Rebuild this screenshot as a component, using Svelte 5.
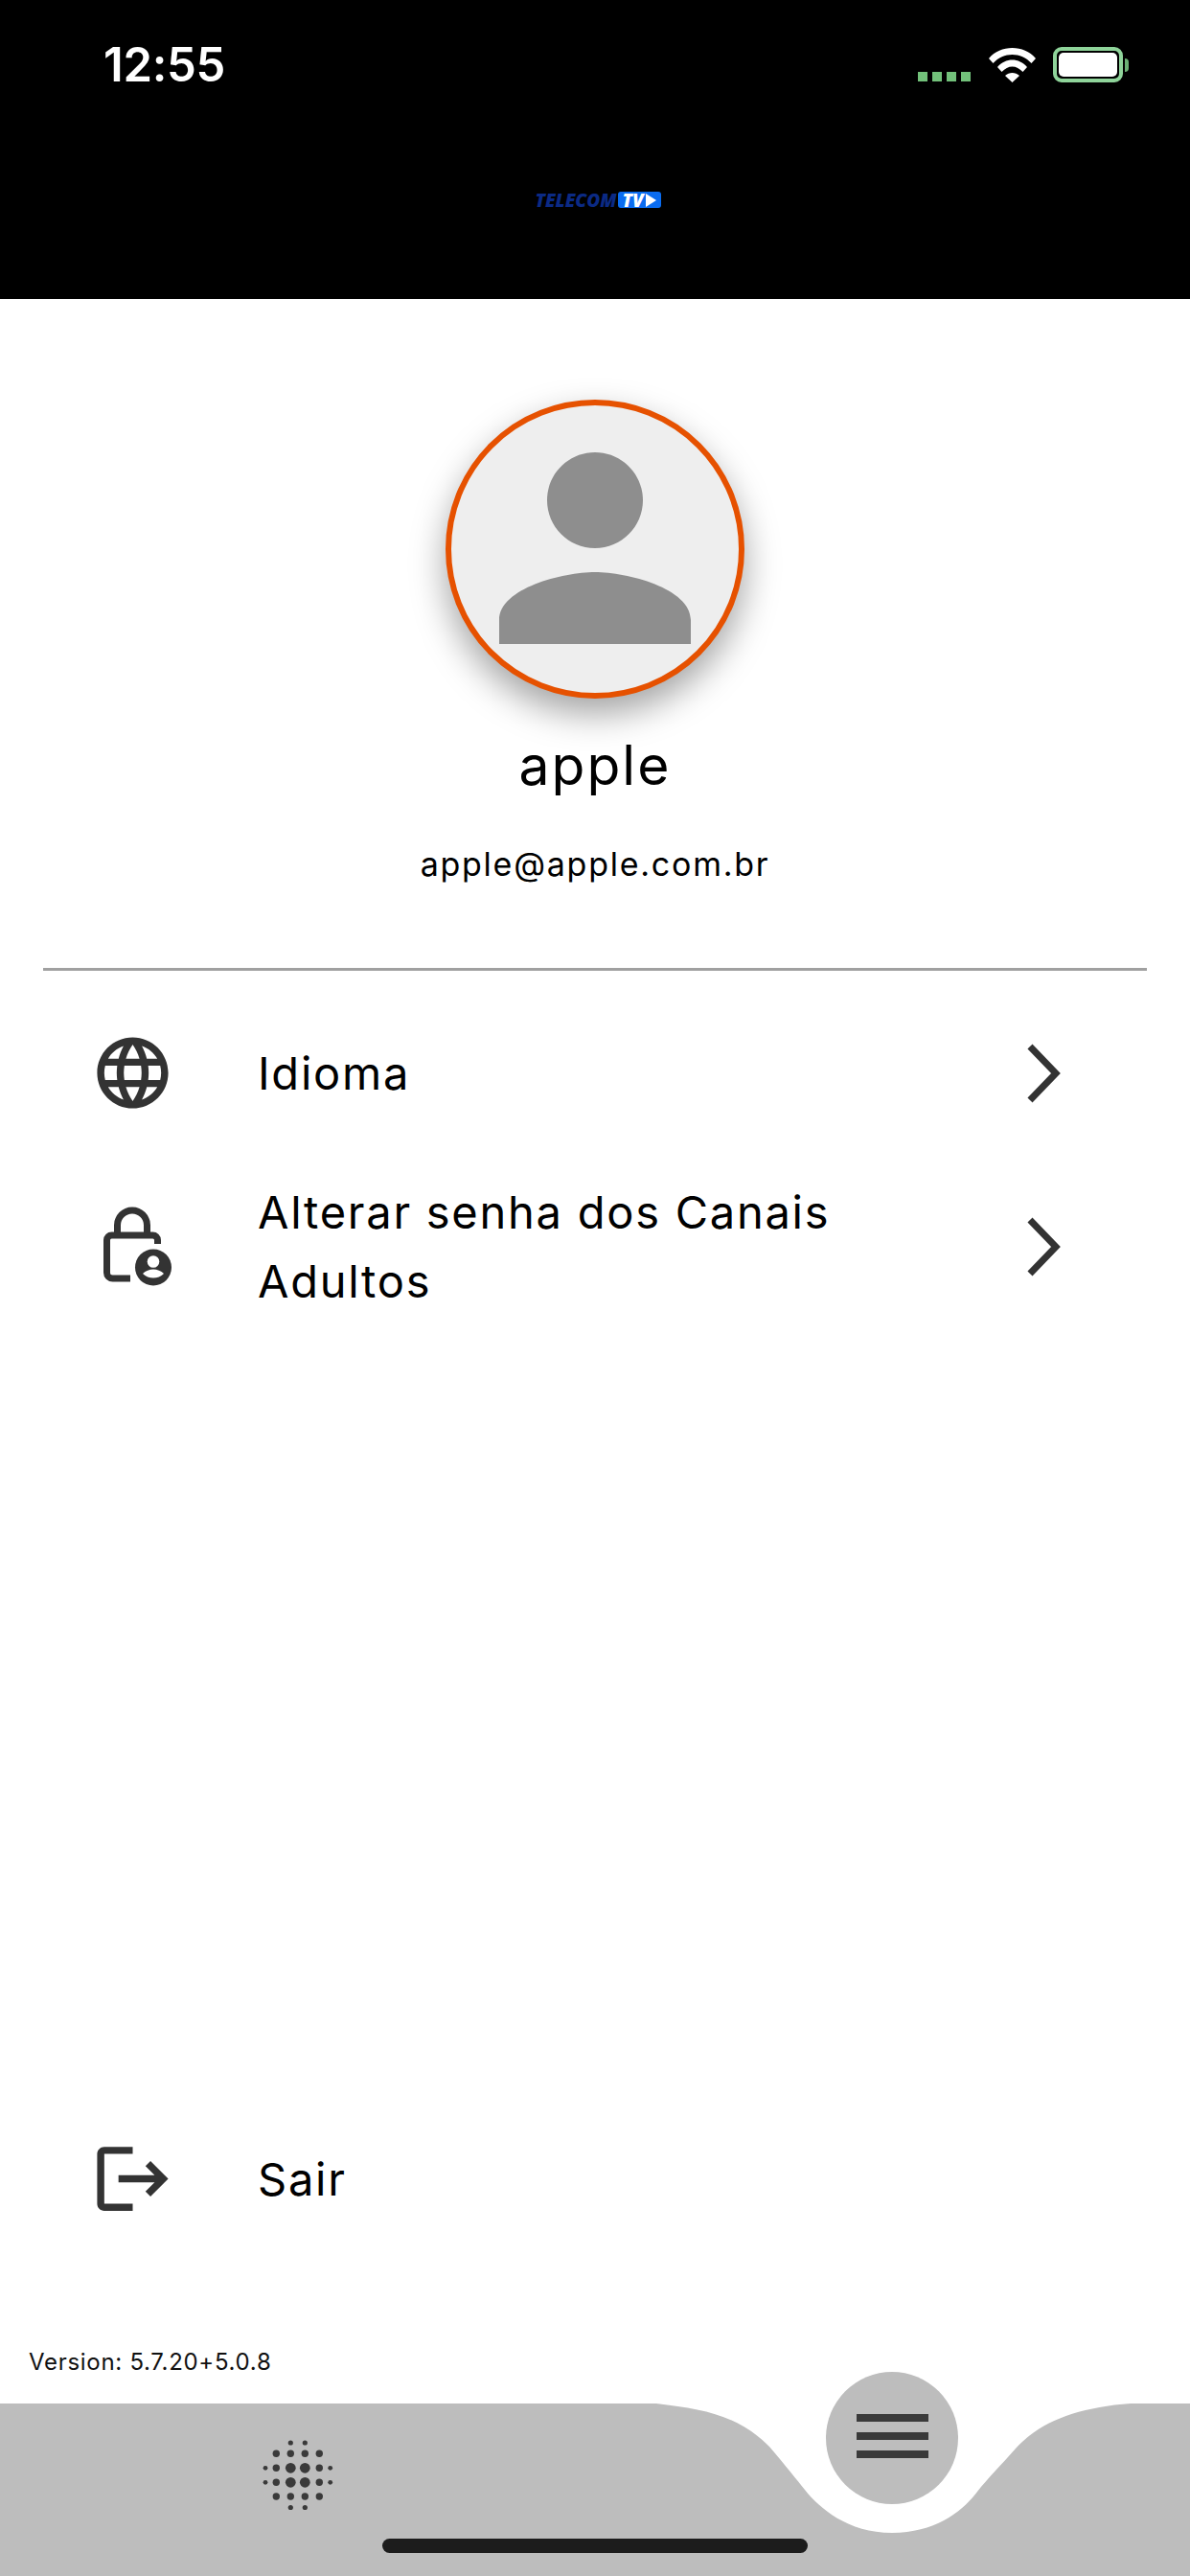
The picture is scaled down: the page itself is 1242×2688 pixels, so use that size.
<script>
    // dot grid of the bottom bar: x, y, r
    const xs = [288.3, 303.3, 318.3, 333.3];
    const dots = [];
    for (const y of [2549, 2616.5]) {
        dots.push([303.3, y, 2.6], [318.3, y, 2.6]);
    }
    for (const y of [2560.3, 2605]) {
        for (const x of xs) dots.push([x, y, 3.7]);
    }
    for (const y of [2575.3, 2590.3]) {
        dots.push([277, y, 2.4], [344.7, y, 2.4], [288.3, y, 3.7], [333.3, y, 3.7], [303.3, y, 5.4], [318.3, y, 5.4]);
    }
</script>

<div class="page">
    <header>
        <div class="status">
            <span class="time">12:55</span>
            <div class="status-icons">
                <div class="signal"><i></i><i></i><i></i><i></i></div>
                <svg class="wifi" viewBox="0 0 49 36" width="49" height="36">
                    <path d="M0 11C6.500 3.500 15 0 24.500 0S42.500 3.500 49 11L44.500 16C39 10 32 7 24.500 7S10 10 4.500 16z" fill="#fff"/>
                    <path d="M9 20C13 15 19 12.500 24.500 12.500S36 15 40 20L35.500 25C32 21.500 28.500 19.500 24.500 19.500S17 21.500 13.500 25z" fill="#fff"/>
                    <path d="M17 29C19 27 22 26 24.500 26S30 27 32 29L24.500 36z" fill="#fff"/>
                </svg>
                <div class="battery"><div class="charge"></div></div>
                <div class="nub"></div>
            </div>
        </div>
        <div class="logo">
            <span class="logo-name">TELECOM</span>
            <span class="logo-tv">TV<svg viewBox="0 0 12 14" width="12" height="14"><path d="M1 0L12 7L1 14z" fill="#fff"/></svg></span>
        </div>
    </header>

    <section class="profile">
        <div class="avatar">
            <svg viewBox="0 0 24 24" width="300" height="300">
                <path fill="#8e8e8e" d="M12 12c2.210 0 4-1.790 4-4s-1.790-4-4-4-4 1.790-4 4 1.790 4 4 4zm0 2c-2.670 0-8 1.340-8 4v2h16v-2c0-2.660-5.330-4-8-4z"/>
            </svg>
        </div>
        <div class="name">apple</div>
        <div class="email">apple@apple.com.br</div>
    </section>

    <hr />

    <nav class="menu">
        <div class="row">
            <svg class="icon" viewBox="0 0 24 24" width="89" height="89">
                <path fill="#333" d="M11.990 2C6.470 2 2 6.480 2 12s4.470 10 9.990 10C17.520 22 22 17.520 22 12S17.520 2 11.990 2zm6.930 6h-2.950c-.320-1.250-.780-2.450-1.380-3.560 1.840.630 3.370 1.910 4.330 3.560zM12 4.040c.830 1.200 1.480 2.530 1.910 3.960h-3.820c.430-1.430 1.080-2.760 1.910-3.960zM4.260 14C4.100 13.360 4 12.690 4 12s.100-1.360.260-2h3.380c-.080.660-.140 1.320-.140 2s.060 1.340.140 2H4.260zm.820 2h2.950c.320 1.250.780 2.450 1.380 3.560-1.840-.630-3.370-1.900-4.330-3.560zm2.950-8H5.080c.960-1.660 2.490-2.930 4.330-3.560C8.810 5.550 8.350 6.750 8.030 8zM12 19.960c-.830-1.200-1.480-2.530-1.910-3.960h3.820c-.430 1.430-1.080 2.760-1.910 3.960zM14.340 14H9.660c-.090-.660-.160-1.320-.160-2s.070-1.350.160-2h4.680c.090.650.160 1.320.160 2s-.070 1.340-.160 2zm.250 5.560c.600-1.110 1.060-2.310 1.380-3.560h2.950c-.960 1.650-2.490 2.930-4.330 3.560zM16.360 14c.080-.660.140-1.320.140-2s-.060-1.340-.140-2h3.380c.160.640.260 1.310.260 2s-.100 1.360-.260 2h-3.380z"/>
            </svg>
            <span class="label">Idioma</span>
            <svg class="chevron" viewBox="0 0 40 62" width="40" height="62">
                <path d="M4 3L31 31L4 59" fill="none" stroke="#333" stroke-width="7"/>
            </svg>
        </div>
        <div class="row two-lines">
            <svg class="icon" viewBox="0 0 89 89" width="89" height="89">
                <path d="M42 77H23.500a6 6 0 0 1-6-6V37a5 5 0 0 1 5-5H65.500a5 5 0 0 1 5 5V41" fill="none" stroke="#333" stroke-width="7"/>
                <path d="M28.500 32V21.500a15.500 15.500 0 0 1 31 0V32" fill="none" stroke="#333" stroke-width="7"/>
                <circle cx="66" cy="65.500" r="19" fill="#333"/>
                <circle cx="66" cy="59.500" r="6.300" fill="#fff"/>
                <path d="M55 72c3-3 7-4.500 11-4.500s8 1.500 11 4.500c-3 3-7 4.500-11 4.500s-8-1.500-11-4.500z" fill="#fff"/>
            </svg>
            <span class="label">Alterar senha dos Canais Adultos</span>
            <svg class="chevron" viewBox="0 0 40 62" width="40" height="62">
                <path d="M4 3L31 31L4 59" fill="none" stroke="#333" stroke-width="7"/>
            </svg>
        </div>
    </nav>

    <div class="spacer"></div>

    <div class="row logout">
        <svg class="icon" viewBox="0 0 24 24" width="89" height="89">
            <path fill="#333" d="M17 7l-1.410 1.410L18.170 11H8v2h10.170l-2.580 2.580L17 17l5-5zM4 5h8V3H4c-1.100 0-2 .900-2 2v14c0 1.100.900 2 2 2h8v-2H4V5z"/>
        </svg>
        <span class="label">Sair</span>
    </div>

    <div class="version">Version: 5.7.20+5.0.8</div>

    <footer>
        <svg class="wave" viewBox="0 2440 1242 248" width="1242" height="248">
            <path fill="#bdbdbd" d="M0 2508H685C735 2514 770 2520 803 2553C820 2573 832 2588 840 2598C855 2617 885 2643 931 2643C977 2643 1005 2620 1020 2600C1030 2587 1045 2572 1060 2555C1085 2527 1125 2512 1180 2508H1242V2688H0z"/>
            {#each dots as d}
                <circle cx={d[0]} cy={d[1]} r={d[2]} fill="#3a3a3a"/>
            {/each}
        </svg>
        <button class="fab" aria-label="Menu"><i></i><i></i><i></i></button>
        <div class="home-bar"></div>
    </footer>
</div>

<style>
    :global(body) {
        margin: 0;
        background: #fff;
    }
    .page {
        width: 1242px;
        height: 2688px;
        display: flex;
        flex-direction: column;
        font-family: Inter, "Liberation Sans", sans-serif;
        color: #000;
        overflow: hidden;
    }
    header {
        height: 312px;
        box-sizing: border-box;
        background: #000;
        display: flex;
        flex-direction: column;
        align-items: center;
    }
    .status {
        width: 100%;
        box-sizing: border-box;
        height: 200px;
        padding: 49px 64px 0 108px;
        display: flex;
        justify-content: space-between;
        align-items: flex-start;
    }
    .time {
        color: #fff;
        font-size: 49px;
        font-weight: 600;
        line-height: 37px;
        letter-spacing: -0.3px;
    }
    .status-icons {
        display: flex;
        align-items: flex-end;
    }
    .signal {
        display: flex;
        gap: 5px;
        margin-right: 19px;
        margin-bottom: 1px;
    }
    .signal i {
        width: 10px;
        height: 10px;
        background: #72c17a;
    }
    .wifi {
        margin-right: 18px;
    }
    .battery {
        width: 73px;
        height: 37px;
        box-sizing: border-box;
        border: 4px solid #8fd49a;
        border-radius: 9px;
        padding: 2px;
    }
    .charge {
        width: 100%;
        height: 100%;
        background: #fff;
        border-radius: 5px;
    }
    .nub {
        width: 4px;
        height: 14px;
        margin-left: 2px;
        margin-bottom: 11px;
        background: #6bb074;
        border-radius: 0 4px 4px 0;
    }
    .logo {
        display: flex;
        align-items: center;
        height: 17px;
        gap: 1px;
        margin-left: 6px;
        font-style: italic;
        font-weight: 800;
        font-size: 19px;
        font-family: "Open Sans", sans-serif;
    }
    .logo-name {
        color: #0b2a84;
    }
    .logo-tv {
        width: 45px;
        height: 17px;
        box-sizing: border-box;
        background: #0a6cf0;
        border-radius: 3px;
        color: #fff;
        padding-left: 5px;
        display: flex;
        align-items: center;
        gap: 1px;
    }
    .profile {
        display: flex;
        flex-direction: column;
        align-items: center;
        padding-top: 105px;
    }
    .avatar {
        width: 312px;
        height: 312px;
        box-sizing: border-box;
        border: 6px solid #e65100;
        border-radius: 50%;
        background: #eee;
        box-shadow: 0 16px 36px rgba(0, 0, 0, 0.36);
        display: flex;
        align-items: center;
        justify-content: center;
    }
    .avatar svg {
        margin-top: -3px;
    }
    .name {
        margin-top: 35px;
        font-size: 57px;
        line-height: 70px;
        letter-spacing: 2px;
    }
    .email {
        margin-top: 47px;
        font-size: 34px;
        line-height: 42px;
        letter-spacing: 1.750px;
    }
    hr {
        width: 1152px;
        margin: 87px 0 0 45px;
        border: 0;
        height: 3px;
        background: #a0a0a0;
    }
    .menu {
        display: flex;
        flex-direction: column;
        margin-top: 62px;
    }
    .row {
        display: flex;
        align-items: center;
        padding-left: 94px;
        min-height: 89px;
    }
    .two-lines {
        margin-top: 65px;
    }
    .icon {
        flex: none;
    }
    .label {
        flex: none;
        width: 700px;
        margin-left: 86px;
        font-size: 47px;
        line-height: 72px;
        letter-spacing: 1.750px;
        color: #000;
    }
    .chevron {
        margin-left: 102px;
    }
    .spacer {
        flex: 1;
    }
    .logout {
        margin-bottom: 132px;
    }
    .version {
        padding-left: 30px;
        font-size: 24px;
        line-height: 30px;
        letter-spacing: 0.700px;
        color: #111;
        margin-bottom: 28px;
    }
    footer {
        position: relative;
        height: 180px;
    }
    .wave {
        position: absolute;
        left: 0;
        bottom: 0;
    }
    .fab {
        position: absolute;
        left: 862px;
        top: -33px;
        width: 138px;
        height: 138px;
        padding: 0;
        border: 0;
        border-radius: 50%;
        background: #bdbdbd;
        display: flex;
        flex-direction: column;
        align-items: center;
        gap: 11px;
        padding-top: 44px;
        box-sizing: border-box;
    }
    .fab i {
        width: 75px;
        height: 8px;
        background: #3a3a3a;
    }
    .home-bar {
        position: absolute;
        left: 399px;
        bottom: 24px;
        width: 444px;
        height: 15px;
        border-radius: 8px;
        background: #1c1c1c;
    }
</style>
